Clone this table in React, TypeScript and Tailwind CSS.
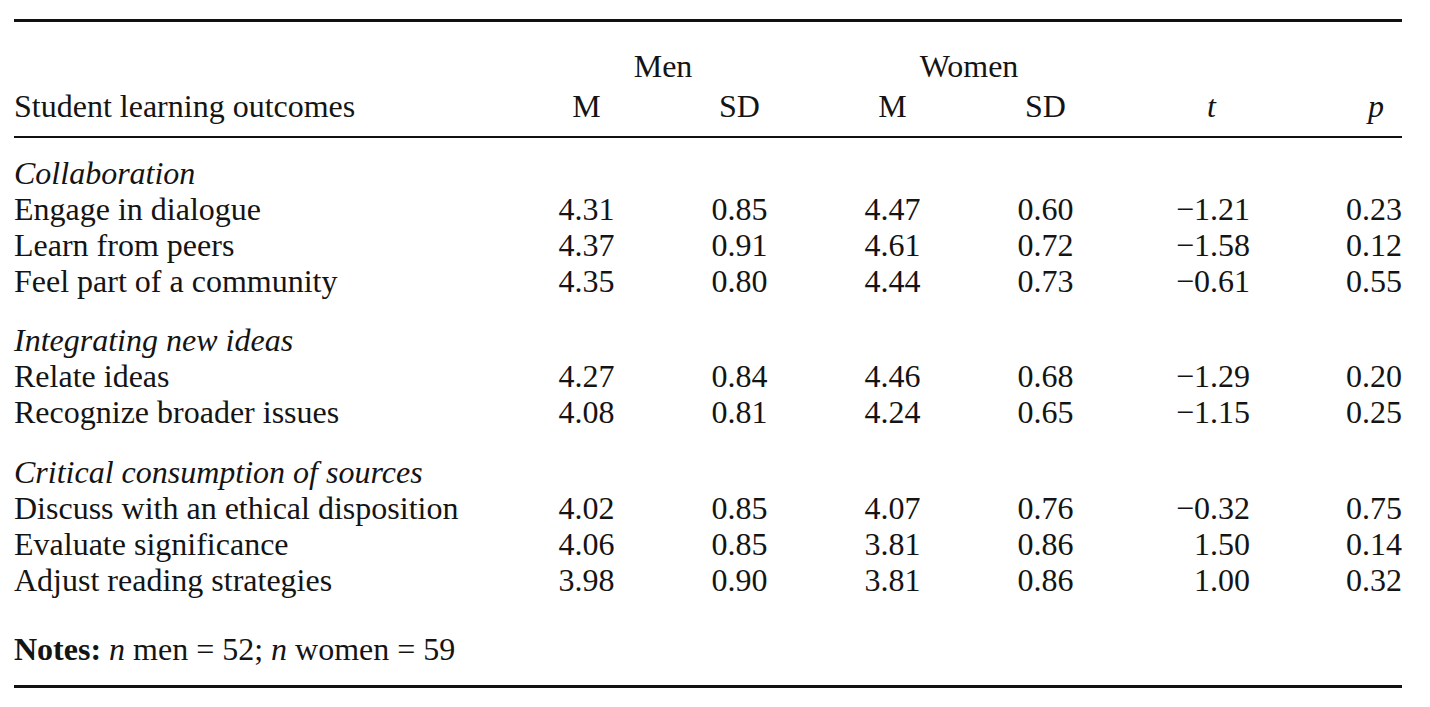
import React from 'react'

// ── Data ─────────────────────────────────────────────────────────────────────

type Row = { label: string; vals: [string, string, string, string, string, string] }
type Group = { title: string; rows: Row[]; gap: string }

const GROUPS: Group[] = [
  {
    title: 'Collaboration',
    gap: 'mt-0',
    rows: [
      { label: 'Engage in dialogue', vals: ['4.31', '0.85', '4.47', '0.60', '−1.21', '0.23'] },
      { label: 'Learn from peers', vals: ['4.37', '0.91', '4.61', '0.72', '−1.58', '0.12'] },
      { label: 'Feel part of a community', vals: ['4.35', '0.80', '4.44', '0.73', '−0.61', '0.55'] },
    ],
  },
  {
    title: 'Integrating new ideas',
    gap: 'mt-[23px]',
    rows: [
      { label: 'Relate ideas', vals: ['4.27', '0.84', '4.46', '0.68', '−1.29', '0.20'] },
      { label: 'Recognize broader issues', vals: ['4.08', '0.81', '4.24', '0.65', '−1.15', '0.25'] },
    ],
  },
  {
    title: 'Critical consumption of sources',
    gap: 'mt-[24px]',
    rows: [
      { label: 'Discuss with an ethical disposition', vals: ['4.02', '0.85', '4.07', '0.76', '−0.32', '0.75'] },
      { label: 'Evaluate significance', vals: ['4.06', '0.85', '3.81', '0.86', '1.50', '0.14'] },
      { label: 'Adjust reading strategies', vals: ['3.98', '0.90', '3.81', '0.86', '1.00', '0.32'] },
    ],
  },
]

// label | M | SD | M | SD | t | p
const COLS = 'grid grid-cols-[496px_153px_153px_153px_153px_128px_152px]'

// ── Table ────────────────────────────────────────────────────────────────────

function DataRow({ row }: { row: Row }) {
  const [m1, sd1, m2, sd2, t, p] = row.vals
  return (
    <div className={COLS}>
      <div>{row.label}</div>
      <div className="text-center">{m1}</div>
      <div className="text-center">{sd1}</div>
      <div className="text-center">{m2}</div>
      <div className="text-center">{sd2}</div>
      <div className="text-right">{t}</div>
      <div className="text-right">{p}</div>
    </div>
  )
}

export default function App() {
  return (
    <div className="w-[1430px] h-[707px] bg-white pt-[19px] pl-[14px] overflow-hidden">
      <div className="w-[1388px] font-['Liberation_Serif',serif] text-[32px] leading-9 text-[#141414]">
        <div className="h-[3px] bg-[#111]" />

        {/* Header */}
        <div className={`${COLS} mt-[26px] mb-1`}>
          <div />
          <div className="col-span-2 text-center">Men</div>
          <div className="col-span-2 text-center">Women</div>
          <div />
          <div />
        </div>
        <div className={COLS}>
          <div>Student learning outcomes</div>
          <div className="text-center">M</div>
          <div className="text-center">SD</div>
          <div className="text-center">M</div>
          <div className="text-center">SD</div>
          <div className="text-right italic pr-[34px]">t</div>
          <div className="text-right italic pr-[18px]">p</div>
        </div>

        <div className="h-[2px] bg-[#111] mt-3" />

        {/* Body */}
        <div className="pt-[17px]">
          {GROUPS.map(g => (
            <div key={g.title} className={g.gap}>
              <div className="italic">{g.title}</div>
              {g.rows.map(r => <DataRow key={r.label} row={r} />)}
            </div>
          ))}
        </div>

        {/* Notes */}
        <div className="mt-[33px]">
          <span className="font-bold">Notes:</span> <span className="italic">n</span> men = 52; <span className="italic">n</span> women = 59
        </div>

        <div className="h-[3px] bg-[#111] mt-[18px]" />
      </div>
    </div>
  )
}
